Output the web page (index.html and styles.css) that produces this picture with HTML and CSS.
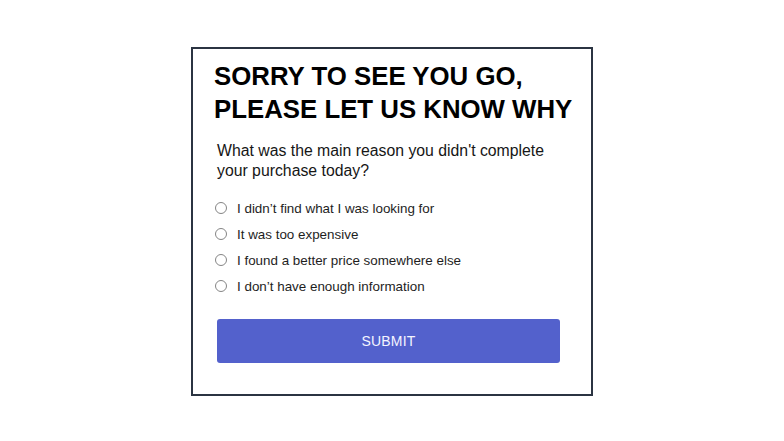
FILE: index.html
```html
<!DOCTYPE html>
<html lang="en">
<head>
<meta charset="utf-8">
<title>Sorry to see you go</title>
<link rel="stylesheet" href="styles.css">
</head>
<body>
<div class="card">
  <h1 class="title">SORRY TO SEE YOU GO,<br>PLEASE LET US KNOW WHY</h1>
  <p class="question">What was the main reason you didn't complete your purchase today?</p>
  <ul class="options">
    <li class="option"><span class="radio"></span><span class="label">I didn’t find what I was looking for</span></li>
    <li class="option"><span class="radio"></span><span class="label">It was too expensive</span></li>
    <li class="option"><span class="radio"></span><span class="label">I found a better price somewhere else</span></li>
    <li class="option"><span class="radio"></span><span class="label">I don’t have enough information</span></li>
  </ul>
  <button class="submit">SUBMIT</button>
</div>
</body>
</html>
```
FILE: styles.css
```css
html, body {
  margin: 0;
  padding: 0;
  background: #ffffff;
}
body {
  font-family: "Liberation Sans", Arial, sans-serif;
  color: #1a1a1a;
}
.card {
  box-sizing: border-box;
  width: 402px;
  margin: 47px auto 0;
  border: 2px solid #2b3442;
  padding: 11px 31px 31px 24px;
  display: flex;
  flex-direction: column;
}
.title {
  margin: 0 0 0 -3px;
  font-size: 25.8px;
  line-height: 33px;
  font-weight: 700;
  color: #000;
  white-space: nowrap;
}
.question {
  margin: 15px 0 0;
  font-size: 15.8px;
  line-height: 19.5px;
  color: #161616;
}
.options {
  list-style: none;
  margin: 15px 0 0;
  padding: 0;
  display: flex;
  flex-direction: column;
}
.option {
  height: 26px;
  display: flex;
  align-items: center;
  gap: 10px;
}
.radio {
  box-sizing: border-box;
  width: 12px;
  height: 12px;
  margin-left: -2px;
  border: 1px solid #858585;
  border-radius: 50%;
  background: #fff;
  flex: none;
}
.label {
  font-size: 13.4px;
  color: #1e1e1e;
}
.submit {
  margin-top: 20px;
  height: 44px;
  width: 100%;
  border: none;
  border-radius: 3px;
  background: #5361cc;
  color: #f4f4ff;
  font-family: "Liberation Sans", Arial, sans-serif;
  font-size: 14px;
  letter-spacing: 0.2px;
  cursor: pointer;
}
```
